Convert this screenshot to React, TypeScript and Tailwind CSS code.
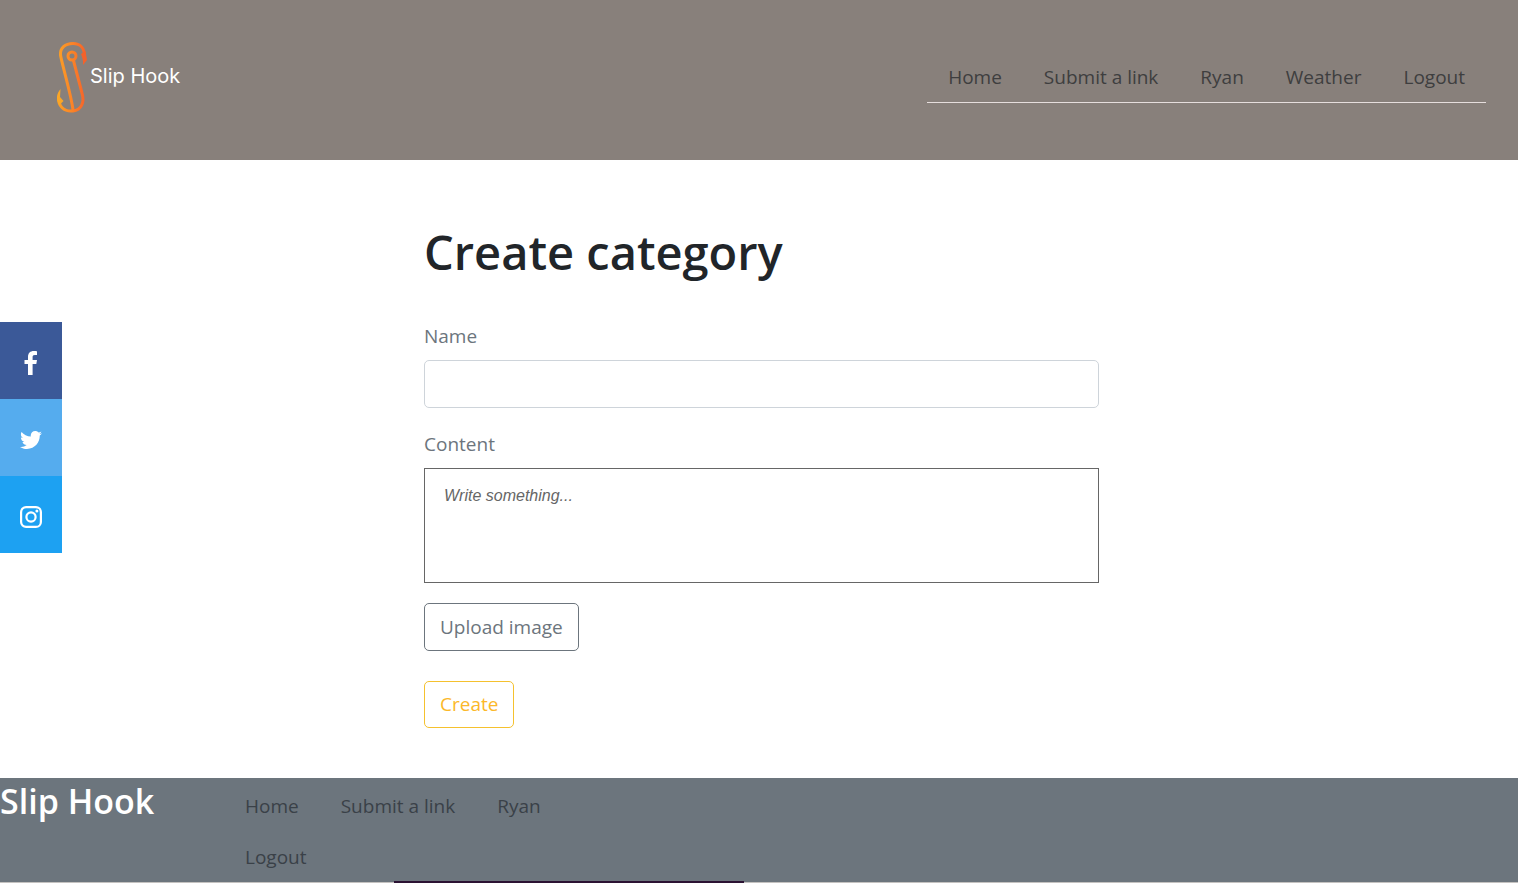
import React from "react";

const topLinks = ["Home", "Submit a link", "Ryan", "Weather", "Logout"];
const footerLinks = ["Home", "Submit a link", "Ryan", "Logout"];

function HookMark() {
  return (
    <svg width="34" height="74" viewBox="0 0 34 74" fill="none" aria-hidden="true">
      <defs>
        <linearGradient id="hook" x1="0" y1="0" x2="34" y2="0" gradientUnits="userSpaceOnUse">
          <stop offset="0" stopColor="#fba626" />
          <stop offset="0.5" stopColor="#fb8427" />
          <stop offset="1" stopColor="#f4592b" />
        </linearGradient>
      </defs>
      <g stroke="url(#hook)" strokeWidth="3" strokeLinecap="round">
        <path d="M29.500 16C29.500 8 25 3.500 18 3.500C10 3.500 5 8 5.500 15C6 20 17 58 18 70" />
        <circle cx="17" cy="16" r="4" strokeWidth="3" />
        <path d="M18.500 20.500L27 53C30 63 26 70 18 71C9 72 3 66 3.500 57" />
      </g>
      <path d="M30.500 11L32 20L28 25C28.500 20 27 17 26 14Z" fill="#f4622b" />
      <path d="M5.500 49L5 57L8.500 61L4.500 65C1 60 1 54 5.500 49Z" fill="#fba626" />
    </svg>
  );
}

function Facebook() {
  return (
    <svg width="14" height="24" viewBox="0 0 14 24" fill="#fff" aria-hidden="true">
      <path d="M4 24V13H0.500V9H4V6C4 2 6.300 0 9.800 0C11.300 0 12.500 0.100 13 0.200V4H10.800C9 4 8.600 4.900 8.600 6.200V9H13L12.300 13H8.600V24Z" />
    </svg>
  );
}

function Twitter() {
  return (
    <svg width="22" height="22" viewBox="0 0 512 512" fill="#fff" aria-hidden="true">
      <path d="M459.370 151.716c.325 4.548.325 9.097.325 13.645 0 138.720-105.583 298.558-298.558 298.558-59.452 0-114.680-17.219-161.137-47.106 8.447.974 16.568 1.299 25.340 1.299 49.055 0 94.213-16.568 130.274-44.832-46.132-.975-84.792-31.188-98.112-72.772 6.498.974 12.995 1.624 19.818 1.624 9.421 0 18.843-1.300 27.614-3.573-48.081-9.747-84.143-51.980-84.143-102.985v-1.299c13.969 7.797 30.214 12.670 47.431 13.319-28.264-18.843-46.781-51.005-46.781-87.391 0-19.492 5.197-37.360 14.294-52.954 51.655 63.675 129.300 105.258 216.365 109.807-1.624-7.797-2.599-15.918-2.599-24.040 0-57.828 46.782-104.934 104.934-104.934 30.213 0 57.502 12.670 76.670 33.137 23.715-4.548 46.456-13.320 66.599-25.340-7.798 24.366-24.366 44.833-46.132 57.827 21.117-2.273 41.584-8.122 60.426-16.243-14.292 20.791-32.161 39.308-52.628 54.253z" />
    </svg>
  );
}

function Instagram() {
  return (
    <svg width="22" height="22" viewBox="0 0 22 22" fill="none" stroke="#fff" strokeWidth="2.2" aria-hidden="true">
      <rect x="1.100" y="1.100" width="19.800" height="19.800" rx="5" />
      <circle cx="11" cy="11" r="4.600" />
      <circle cx="16.900" cy="5.100" r="1.500" fill="#fff" stroke="none" />
    </svg>
  );
}

export default function App() {
  return (
    <div className="relative flex min-h-screen flex-col bg-white font-['Open_Sans','Noto_Sans',sans-serif] text-[19px] text-[#6c757d]">
      <header className="flex h-40 items-center justify-between bg-[#88807b] pr-8 pb-1 pl-[55px]">
        <a href="#" className="flex items-center gap-px pb-0.5">
          <HookMark />
          <span className="pb-0.5 font-['Inter',sans-serif] text-[20px] leading-6 text-white">Slip Hook</span>
        </a>
        <nav className="border-b border-[#e6dedd]">
          <ul className="flex">
            {topLinks.map((label) => (
              <li key={label}>
                <a href="#" className="block px-[21px] pt-2 pb-[9px] leading-8 text-[#3e3e3f]">{label}</a>
              </li>
            ))}
          </ul>
        </nav>
      </header>

      <aside aria-label="Social links" className="absolute top-[322px] left-0 flex w-[62px] flex-col text-white">
        <a href="#" aria-label="Facebook" className="flex h-[77px] items-center justify-center bg-[#3b5998] pt-1"><Facebook /></a>
        <a href="#" aria-label="Twitter" className="flex h-[77px] items-center justify-center bg-[#55acee] pt-1"><Twitter /></a>
        <a href="#" aria-label="Instagram" className="flex h-[77px] items-center justify-center bg-[#1da1f2] pt-1"><Instagram /></a>
      </aside>

      <main className="flex grow justify-center pt-[60px] pb-[50px] pl-[5px]">
        <form className="w-[675px] max-w-full" onSubmit={(e) => e.preventDefault()}>
          <h1 className="text-[47px] leading-[64px] font-semibold text-[#212529]">Create category</h1>
          <label htmlFor="name" className="mt-9 block leading-8">Name</label>
          <input id="name" type="text" className="mt-2 block h-12 w-full rounded-[5px] border border-[#ced4da] px-4" />
          <label htmlFor="content" className="mt-5 block leading-8">Content</label>
          <textarea
            id="content"
            placeholder="Write something..."
            className="mt-2 block h-[115px] w-full resize-none border border-[#666] px-[19px] py-[15px] font-['Liberation_Sans',sans-serif] text-base leading-6 text-[#444] placeholder:text-[#666] placeholder:italic"
          />
          <button type="button" className="mt-5 block h-12 rounded-[5px] border border-[#6c757d] px-[15px]">Upload image</button>
          <button type="submit" className="mt-[30px] block h-[47px] rounded-[5px] border border-[#f5c12e] px-[15px] text-[#fbb829]">Create</button>
        </form>
      </main>

      <footer className="relative flex border-b border-[#c4c2c0] bg-[#6c757d]">
        <h2 className="w-[224px] text-[34px] leading-[46px] font-semibold text-white">Slip Hook</h2>
        <ul className="flex w-[350px] flex-wrap pt-0.5">
          {footerLinks.map((label) => (
            <li key={label}>
              <a href="#" className="block px-[21px] pt-2.5 pb-[9px] leading-8 text-[#3a4148]">{label}</a>
            </li>
          ))}
        </ul>
        <div className="absolute -bottom-px left-[394px] h-0.5 w-[350px] bg-[#2b1233]" />
      </footer>
    </div>
  );
}
